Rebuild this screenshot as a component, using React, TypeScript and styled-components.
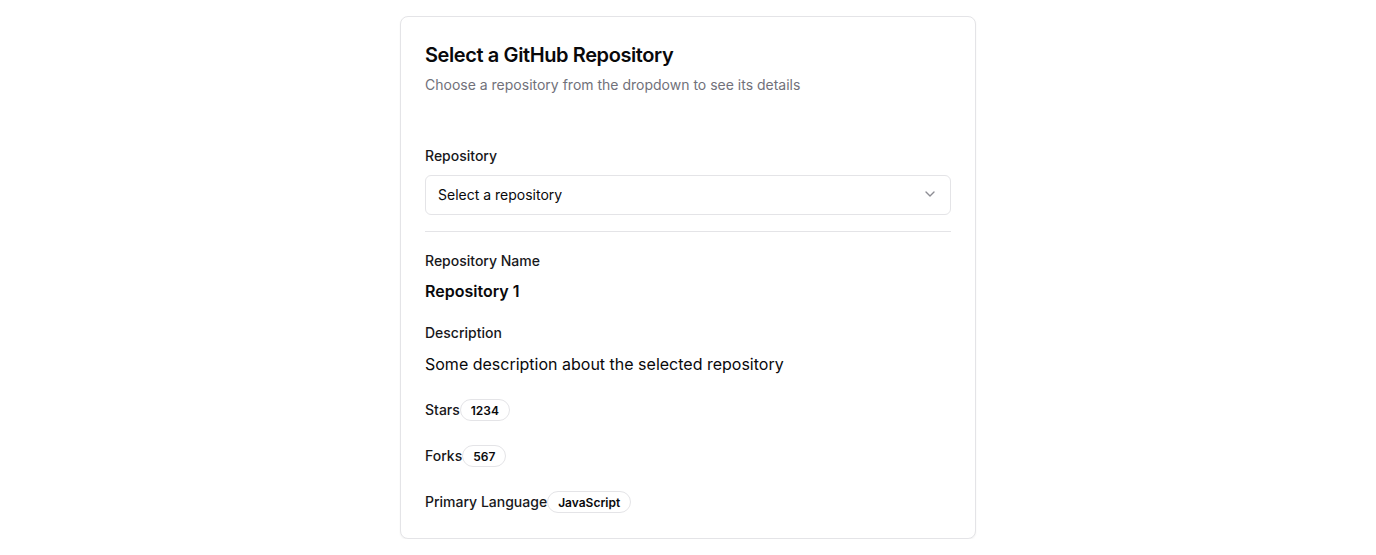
import styled, { createGlobalStyle } from 'styled-components'

const GlobalStyle = createGlobalStyle`
  * { box-sizing: border-box; }
  body {
    margin: 0;
    background: #ffffff;
    font-family: Inter, "Noto Sans", sans-serif;
    color: #09090b;
  }
`

const ChevronDown = (): JSX.Element => (
  <svg width="16" height="16" viewBox="0 0 24 24" fill="none" stroke="currentColor" strokeWidth="2" strokeLinecap="round" strokeLinejoin="round">
    <path d="m6 9 6 6 6-6" />
  </svg>
)

const App = (): JSX.Element => {
  return (
    <Page>
      <GlobalStyle />
      <Card>
        <Header>
          <Title>Select a GitHub Repository</Title>
          <Subtitle>Choose a repository from the dropdown to see its details</Subtitle>
        </Header>
        <Content>
          <Label>Repository</Label>
          <SelectBox>
            <span>Select a repository</span>
            <Chevron>
              <ChevronDown />
            </Chevron>
          </SelectBox>
          <Divider />
          <Label>Repository Name</Label>
          <RepoName>Repository 1</RepoName>
          <Label>Description</Label>
          <DescText>Some description about the selected repository</DescText>
          <StatRow>
            <Label>Stars</Label>
            <Badge>1234</Badge>
          </StatRow>
          <StatRow>
            <Label>Forks</Label>
            <Badge>567</Badge>
          </StatRow>
          <StatRow>
            <Label>Primary Language</Label>
            <Badge>JavaScript</Badge>
          </StatRow>
        </Content>
      </Card>
    </Page>
  )
}

const Page = styled.div`
  display: flex;
  justify-content: center;
  padding-top: 16px;
`

const Card = styled.div`
  width: 576px;
  border: 1px solid #e4e4e7;
  border-radius: 8px;
  background: #fff;
  box-shadow: 0 1px 2px rgba(0, 0, 0, 0.05);
`

const Header = styled.div`
  display: flex;
  flex-direction: column;
  gap: 6px;
  padding: 24px;
`

const Title = styled.h3`
  margin: 0;
  font-size: 20px;
  line-height: 28px;
  font-weight: 600;
  letter-spacing: -0.4px;
`

const Subtitle = styled.p`
  margin: 0;
  font-size: 14px;
  line-height: 20px;
  color: #71717a;
`

const Content = styled.div`
  display: flex;
  flex-direction: column;
  padding: 27px 24px 25px;
`

const Label = styled.div`
  font-size: 14px;
  line-height: 20px;
  font-weight: 500;
  color: #18181b;
`

const SelectBox = styled.div`
  display: flex;
  align-items: center;
  justify-content: space-between;
  height: 40px;
  margin-top: 9px;
  padding: 0 12px 2px;
  border: 1px solid #e4e4e7;
  border-radius: 6px;
  font-size: 14px;
`

const Chevron = styled.span`
  display: flex;
  color: #71717a;
  opacity: 0.8;
`

const Divider = styled.div`
  height: 1px;
  background: #e4e4e7;
  margin: 16px 0 19px;
`

const RepoName = styled.div`
  font-size: 16px;
  line-height: 24px;
  font-weight: 600;
  margin: 8px 0 20px;
`

const DescText = styled.div`
  font-size: 16px;
  line-height: 24px;
  margin: 9px 0 23px;
`

const StatRow = styled.div`
  display: flex;
  align-items: center;
  margin-bottom: 24px;

  &:last-child {
    margin-bottom: 0;
  }
`

const Badge = styled.span`
  display: inline-flex;
  align-items: center;
  height: 22px;
  padding: 0 10px;
  border: 1px solid #e4e4e7;
  border-radius: 9999px;
  font-size: 12px;
  font-weight: 600;
`

export default App
